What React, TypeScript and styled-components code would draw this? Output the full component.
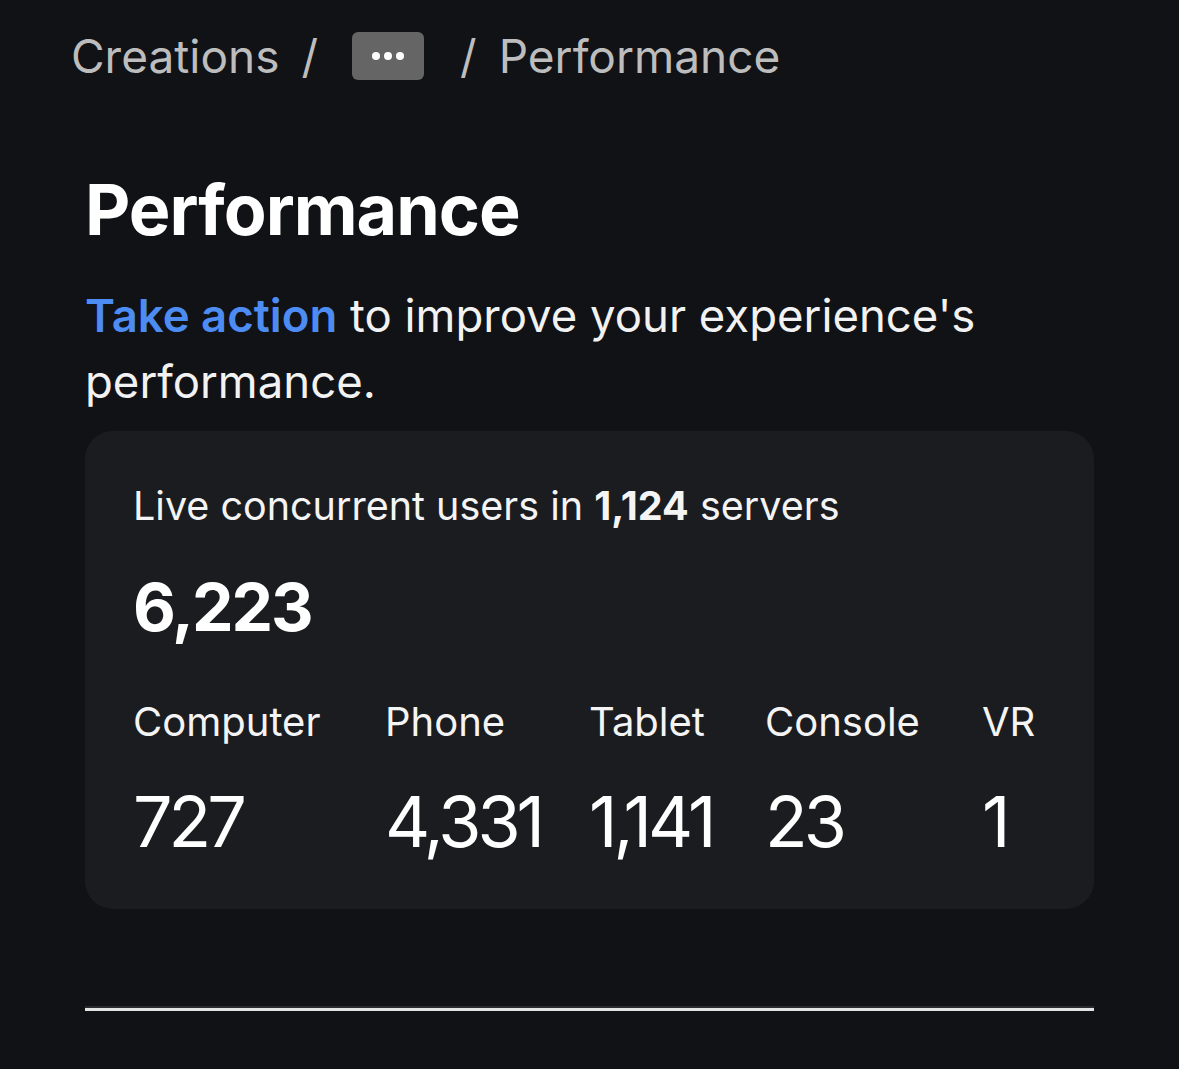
import React from 'react'
import styled, { createGlobalStyle } from 'styled-components'

const GlobalStyle = createGlobalStyle`
  html, body {
    margin: 0;
    padding: 0;
    background: #111216;
  }
  body {
    font-family: Inter, 'Noto Sans', sans-serif;
    color: #ffffff;
  }
`

const Page = styled.div`
  width: 1179px;
  height: 1069px;
  box-sizing: border-box;
  padding: 26px 85px 0 85px;
  display: flex;
  flex-direction: column;
`

const Breadcrumb = styled.nav`
  display: flex;
  align-items: center;
  margin-left: -14px;
  height: 60px;
  font-size: 46px;
  color: #bdbdbe;
`

const Crumb = styled.span`
  line-height: 1;
`

const Slash = styled.span<{ before: number; after: number }>`
  margin: 0 ${(p) => p.after}px 0 ${(p) => p.before}px;
`

const MoreButton = styled.button`
  width: 72px;
  height: 48px;
  border: none;
  border-radius: 6px;
  background: #656565;
  display: flex;
  align-items: center;
  justify-content: center;
  gap: 4px;
  padding: 0;
`

const Dot = styled.span`
  width: 8px;
  height: 8px;
  border-radius: 50%;
  background: #ffffff;
`

const Title = styled.h1`
  margin: 89px 0 0 0;
  font-size: 70px;
  font-weight: 700;
  line-height: 1;
  letter-spacing: -1px;
`

const Lead = styled.p`
  margin: 38px 0 0 0;
  font-size: 45.5px;
  line-height: 66px;
  color: #f2f2f2;
  width: 980px;
`

const Action = styled.a`
  color: #4d8cf2;
  font-weight: 600;
  text-decoration: none;
`

const Card = styled.section`
  margin-top: 16px;
  height: 478px;
  box-sizing: border-box;
  border-radius: 28px;
  background: #1b1c20;
  padding: 50px 48px 0 48px;
`

const Caption = styled.div`
  font-size: 39.5px;
  line-height: 50px;
  color: #f4f4f4;
  b {
    font-weight: 700;
  }
`

const Total = styled.div`
  margin-top: 43px;
  font-size: 66px;
  font-weight: 700;
  line-height: 1;
  letter-spacing: -2px;
`

const Devices = styled.div`
  margin-top: 57px;
  display: grid;
  grid-template-columns: 252px 204px 176px 217px auto;
  row-gap: 40px;
`

const Label = styled.div`
  font-size: 40px;
  line-height: 50px;
  color: #f4f4f4;
`

const Value = styled.div`
  font-size: 70px;
  line-height: 1;
  letter-spacing: -4px;
`

const Rule = styled.div`
  margin-top: 97px;
  height: 3px;
  background: #e3e3e3;
  border-top: 2px solid #2a2b2f;
`

const devices = [
  { label: 'Computer', value: '727' },
  { label: 'Phone', value: '4,331' },
  { label: 'Tablet', value: '1,141' },
  { label: 'Console', value: '23' },
  { label: 'VR', value: '1' },
]

export default function App() {
  return (
    <>
      <GlobalStyle />
      <Page>
        <Breadcrumb>
          <Crumb>Creations</Crumb>
          <Slash before={22} after={34}>/</Slash>
          <MoreButton aria-label="More">
            <Dot />
            <Dot />
            <Dot />
          </MoreButton>
          <Slash before={36} after={22}>/</Slash>
          <Crumb>Performance</Crumb>
        </Breadcrumb>
        <Title>Performance</Title>
        <Lead>
          <Action href="#">Take action</Action> to improve your experience's performance.
        </Lead>
        <Card>
          <Caption>
            Live concurrent users in <b>1,124</b> servers
          </Caption>
          <Total>6,223</Total>
          <Devices>
            {devices.map((d) => (
              <Label key={d.label}>{d.label}</Label>
            ))}
            {devices.map((d) => (
              <Value key={d.label}>{d.value}</Value>
            ))}
          </Devices>
        </Card>
        <Rule />
      </Page>
    </>
  )
}
